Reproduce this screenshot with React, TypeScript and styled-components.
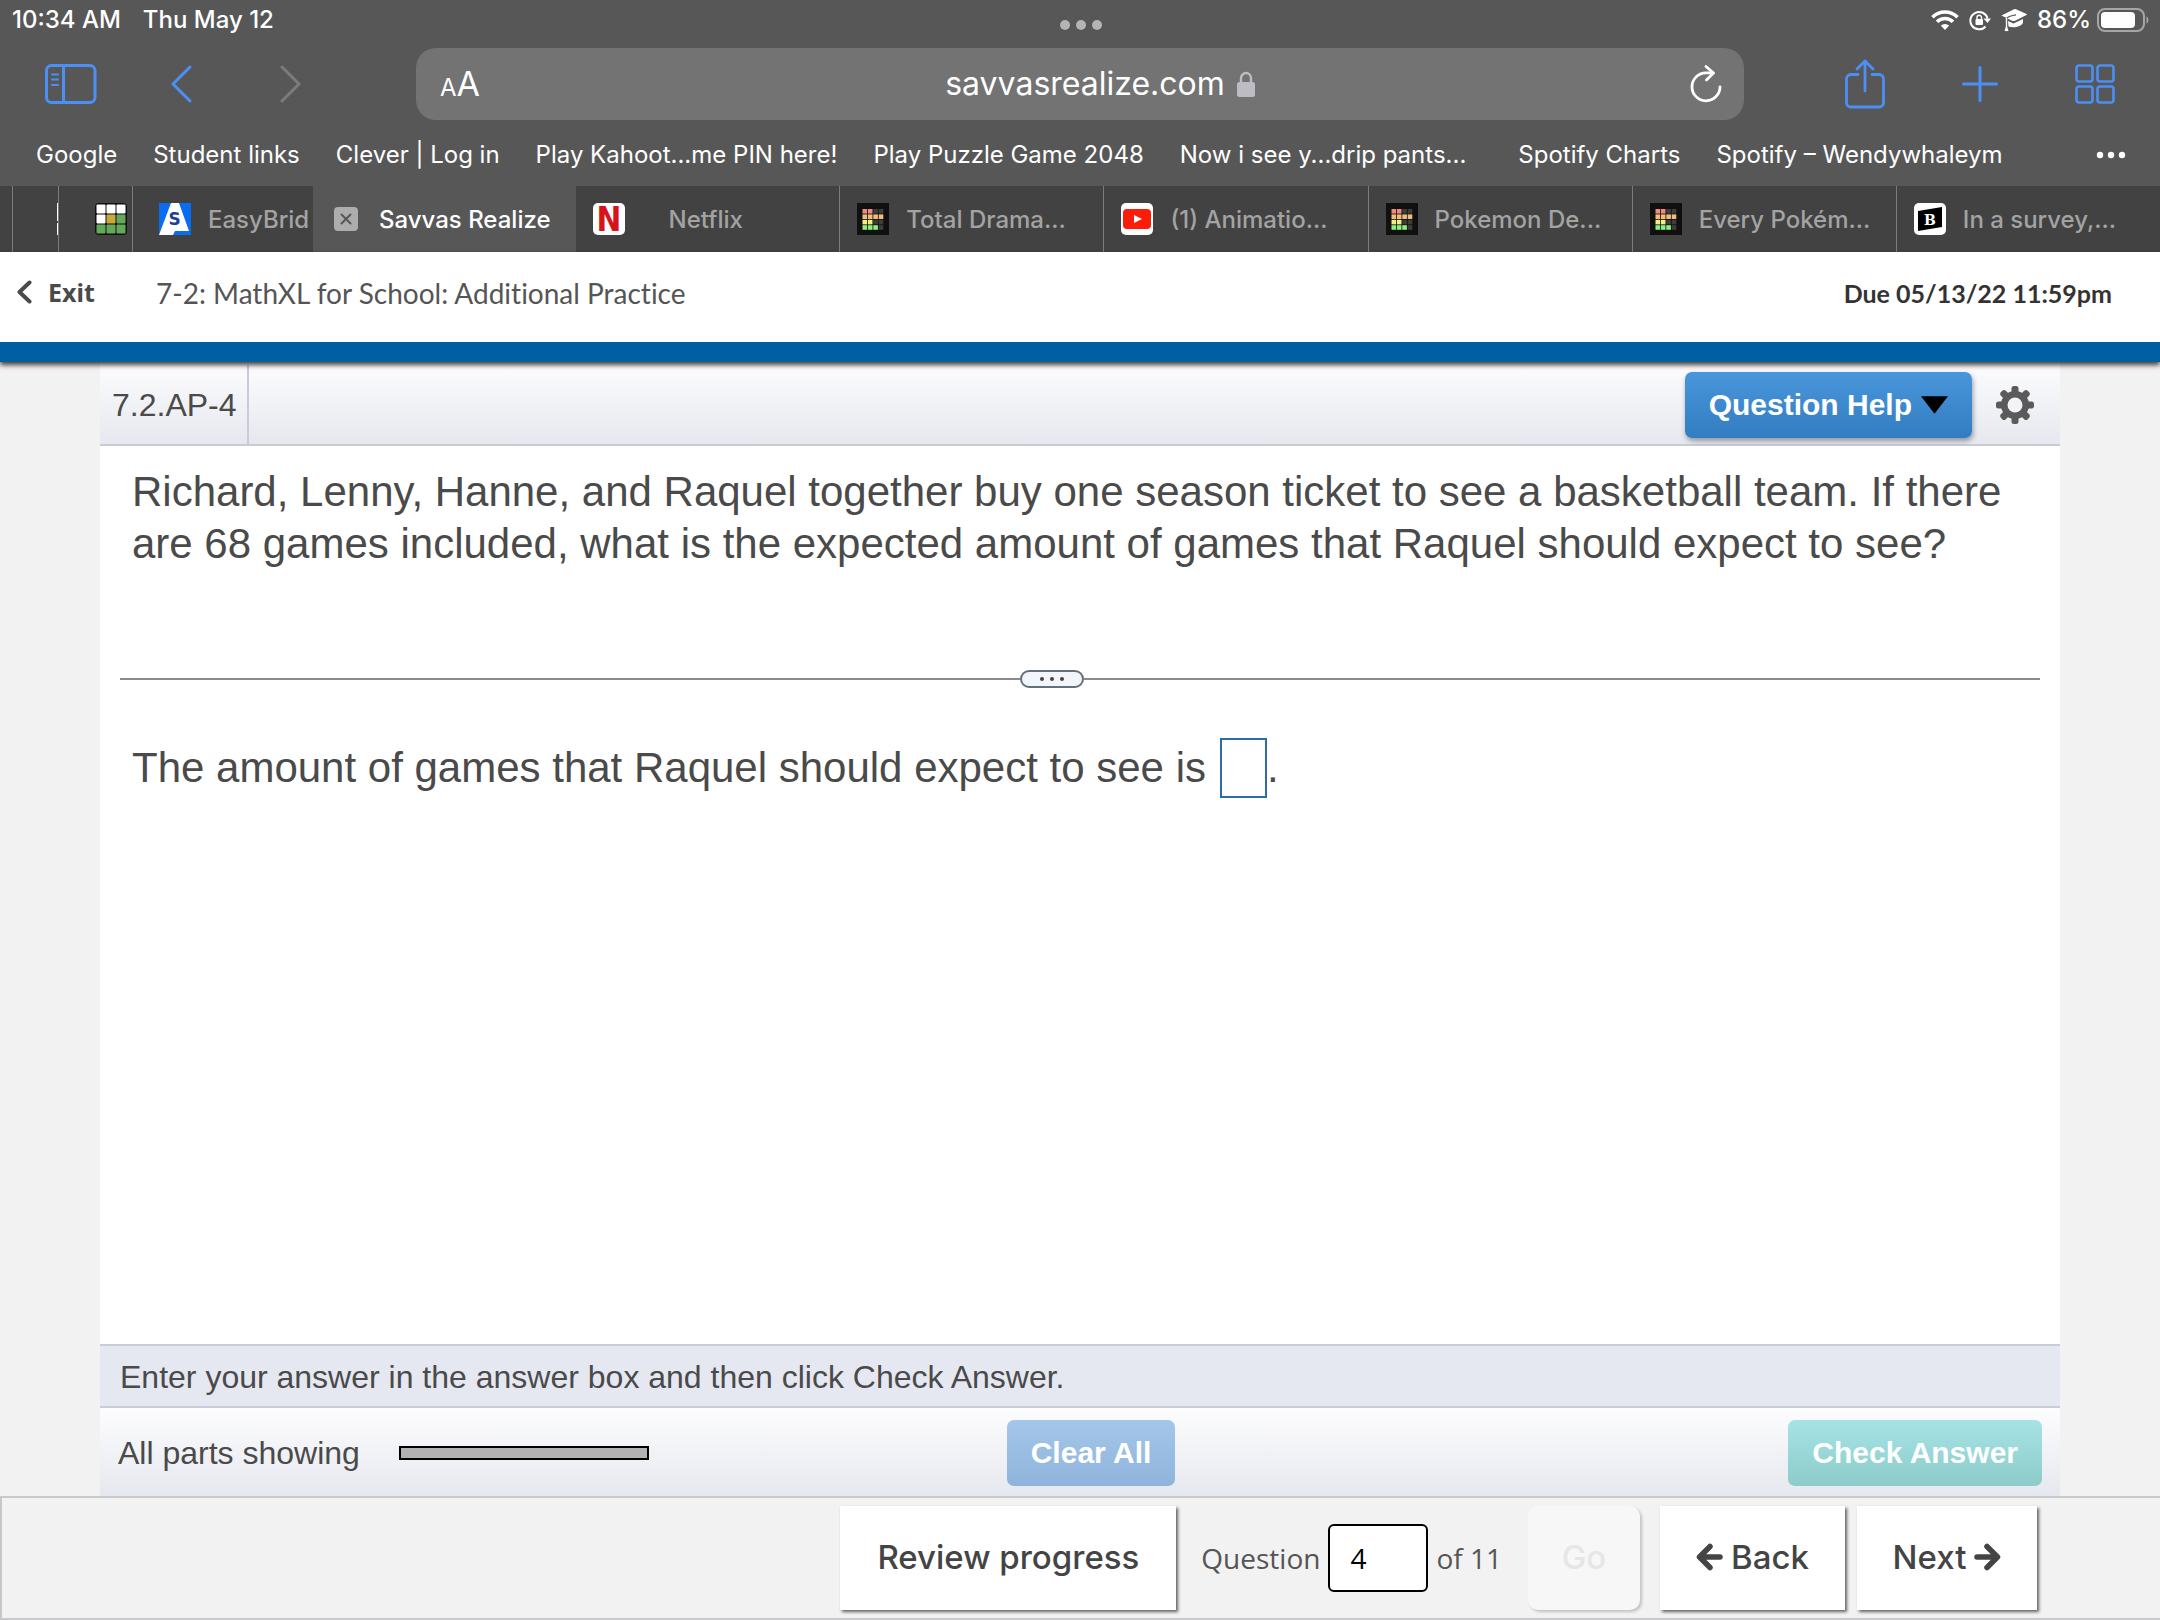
import React, { useState } from "react";
import styled, { createGlobalStyle, css } from "styled-components";

const ui = `Inter, "Noto Sans", sans-serif`;
const arial = `"Liberation Sans", Arial, sans-serif`;
const lato = `Lato, "Open Sans", sans-serif`;
const blue = "#4c8ff5";

const GlobalStyle = createGlobalStyle`
  *, *::before, *::after { box-sizing: border-box; }
  body { margin: 0; background: #f2f2f2; }
  button, input { font: inherit; margin: 0; padding: 0; border: 0; background: none; color: inherit; border-radius: 0; }
  button { cursor: pointer; }
  svg { display: block; flex: none; }
  p, h1, h2 { margin: 0; font-weight: 400; }
`;

const Page = styled.div`
  display: flex;
  flex-direction: column;
  min-height: 100vh;
  font-family: ${arial};
  color: #4a4a4a;
`;

/* Browser chrome */
const Chrome = styled.header`
  background: #575757;
  color: #fff;
  font-family: ${ui};
`;

const StatusBar = styled.div`
  display: grid;
  grid-template-columns: 1fr auto 1fr;
  align-items: center;
  height: 48px;
  padding: 0 10px 8px 12px;
  font-size: 24px;
  line-height: 40px;
  font-weight: 500;
`;

const StatusGroup = styled.div<{ $end?: boolean; $gap: number }>`
  display: flex;
  align-items: center;
  gap: ${(p) => p.$gap}px;
  justify-content: ${(p) => (p.$end ? "flex-end" : "flex-start")};
`;

const GrabDots = styled.button`
  display: flex;
  padding-top: 10px;
  gap: 6px;
  i { width: 10px; height: 10px; border-radius: 50%; background: #b4b4b4; }
`;

const BatteryGroup = styled.span`
  display: flex;
  align-items: center;
  gap: 6px;
`;

const Toolbar = styled.div`
  display: grid;
  grid-template-columns: 416px 1fr 416px;
  align-items: center;
`;

const ToolGroup = styled.div<{ $end?: boolean }>`
  display: flex;
  align-items: center;
  ${(p) =>
    p.$end
      ? css`justify-content: flex-end; gap: 63px; padding-right: 39px;`
      : css`gap: 58px; padding-left: 45px;`}
`;

const IconButton = styled.button<{ $color?: string }>`
  display: grid;
  place-items: center;
  width: 52px;
  height: 56px;
  color: ${(p) => p.$color || blue};
`;

const AddressBar = styled.div`
  display: grid;
  grid-template-columns: 76px 1fr 76px;
  align-items: center;
  height: 72px;
  border-radius: 20px;
  background: #737373;
  ${IconButton} { justify-self: center; }
`;

const ReaderButton = styled.button`
  padding: 4px 0 0 24px;
  text-align: left;
  font-size: 34px;
  line-height: 40px;
  small { font-size: 24px; }
`;

const Address = styled.div`
  display: flex;
  align-items: center;
  justify-content: center;
  gap: 12px;
  padding-left: 40px;
  font-size: 32px;
  line-height: 40px;
`;

const Bookmarks = styled.nav`
  display: flex;
  align-items: center;
  gap: 36px;
  height: 66px;
  padding: 4px 30px 0 36px;
  font-size: 24px;
  line-height: 32px;
  white-space: nowrap;
`;

const Bookmark = styled.a<{ $wide?: boolean }>`
  color: #fff;
  text-decoration: none;
  padding-right: ${(p) => (p.$wide ? 16 : 0)}px;
`;

const MoreButton = styled(IconButton)`
  margin-left: auto;
  width: 38px;
  height: 32px;
`;

const TabStrip = styled.div`
  display: flex;
  height: 66px;
  background: #424242;
`;

const TabSliver = styled.div<{ $width: number; $pad?: number }>`
  display: flex;
  align-items: center;
  justify-content: flex-end;
  width: ${(p) => p.$width}px;
  padding-right: ${(p) => p.$pad || 0}px;
  border-right: 1px solid #7c7c7c;
`;

const SliverEdge = styled.span`
  width: 1px;
  height: 32px;
  background: linear-gradient(#fff 0 18px, #424242 18px 20px, #fff 20px);
`;

const TabItem = styled.div<{ $active?: boolean; $clipped?: boolean; $divider?: boolean }>`
  display: flex;
  align-items: center;
  gap: 17px;
  white-space: nowrap;
  font-size: 24px;
  line-height: 32px;
  font-weight: 500;
  color: ${(p) => (p.$active ? "#fff" : "#a3a3a3")};
  background: ${(p) => (p.$active ? "#575757" : "transparent")};
  border-left: ${(p) => (p.$divider ? 1 : 0)}px solid #7c7c7c;
  ${(p) =>
    p.$clipped
      ? css`flex: 0 0 180px; padding-left: 26px;`
      : css`flex: 1 1 0; min-width: 0; padding: 0 20px 0 17px;`}
`;

const TabTitle = styled.button<{ $inset?: boolean }>`
  flex: 1;
  padding-top: 2px;
  text-align: ${(p) => (p.$inset ? "center" : "left")};
  padding-right: ${(p) => (p.$inset ? 50 : 0)}px;
`;

const CloseTab = styled.button`
  display: grid;
  place-items: center;
  width: 24px;
  height: 24px;
  margin: 0 4px;
  border-radius: 4px;
  background: #adadad;
  color: #575757;
`;

/* Assignment header */
const CourseHeader = styled.div`
  display: flex;
  align-items: center;
  height: 110px;
  padding: 0 48px 8px 16px;
  background: #fff;
  border-bottom: 20px solid #005fa3;
  box-shadow: 0 3px 5px rgba(0, 0, 0, 0.75);
  font-family: ${lato};
  font-variant-ligatures: none;
  position: relative;
`;

const ExitLink = styled.a`
  display: flex;
  align-items: center;
  gap: 16px;
  width: 140px;
  padding-bottom: 2px;
  color: #4a4a4a;
  text-decoration: none;
  font: 700 25px/32px "Noto Sans", sans-serif;
`;

const CourseTitle = styled.h1`
  flex: 1;
  font-size: 28px;
  line-height: 36px;
  color: #555;
`;

const DueDate = styled.div`
  font-size: 25px;
  line-height: 32px;
  font-weight: 700;
  color: #333;
`;

/* Exercise */
const Exercise = styled.main`
  flex: 1;
  display: flex;
  flex-direction: column;
  margin: 0 100px;
  background: #fff;
`;

const barFill = css`
  background: linear-gradient(#fdfdfe, #e6e8ef);
`;

const ExerciseBar = styled.div`
  display: flex;
  align-items: center;
  gap: 24px;
  height: 84px;
  padding: 3px 26px 0 0;
  border-bottom: 2px solid #c9ccd8;
  ${barFill}
`;

const ExerciseId = styled.h2`
  display: flex;
  align-items: center;
  height: 100%;
  padding: 0 10px 0 12px;
  margin-right: auto;
  border-right: 2px solid #c9ccd8;
  font-size: 32px;
  line-height: 40px;
`;

const ActionButton = styled.button<{ $tone: "primary" | "soft" | "teal" }>`
  display: flex;
  align-items: center;
  justify-content: center;
  gap: 9px;
  height: 66px;
  padding: 0 24px;
  border-radius: 7px;
  color: #fff;
  font-size: 30px;
  line-height: 40px;
  font-weight: 700;
  white-space: nowrap;
  background: ${(p) =>
    p.$tone === "primary"
      ? "linear-gradient(#4a96dc, #327dc0)"
      : p.$tone === "soft"
      ? "linear-gradient(#a4c6ea, #8fb4db)"
      : "linear-gradient(#a7e3e5, #8dcccb)"};
  box-shadow: ${(p) => (p.$tone === "primary" ? "1px 3px 5px rgba(60,70,90,.5)" : "none")};
`;

const GearButton = styled.button`
  color: #5a5a5a;
`;

const Problem = styled.section`
  flex: 1;
  padding: 20px 20px 40px;
  font-size: 42px;
  line-height: 52px;
`;

const Prompt = styled.p`
  min-height: 203px;
  padding: 0 12px;
`;

const Divider = styled.div`
  display: flex;
  align-items: center;
  height: 20px;
  &::before, &::after { content: ""; height: 2px; background: #868c92; }
  &::before { flex: 900; }
  &::after { flex: 956; }
`;

const DividerHandle = styled.button`
  display: flex;
  align-items: center;
  justify-content: center;
  gap: 6px;
  width: 64px;
  height: 18px;
  border: 2px solid #66707a;
  border-radius: 9px;
  background: #f2f5f9;
  i { width: 4px; height: 4px; border-radius: 50%; background: #444; }
`;

const AnswerLine = styled.label`
  display: flex;
  align-items: center;
  padding: 49px 12px 0;
`;

const AnswerInput = styled.input`
  width: 47px;
  height: 60px;
  margin-left: 14px;
  border: 2px solid #2f69b0;
  text-align: center;
`;

const Instruction = styled.p`
  padding: 11px 20px 9px;
  background: #e5e8f1;
  border: solid #c9ccd8;
  border-width: 2px 0;
  font-size: 32px;
  line-height: 40px;
`;

const Controls = styled.div`
  display: grid;
  grid-template-columns: 888fr auto 866fr;
  align-items: center;
  height: 88px;
  padding: 2px 18px 0;
  font-size: 32px;
  line-height: 40px;
  ${barFill}
`;

const PartsStatus = styled.div`
  display: flex;
  align-items: center;
  gap: 39px;
`;

const PartsBar = styled.span`
  width: 250px;
  height: 14px;
  border: 2px solid #000;
  background: #b2b2b2;
`;

const ControlEnd = styled.div`
  display: flex;
  justify-content: flex-end;
`;

/* Footer navigation */
const Footer = styled.footer`
  display: flex;
  align-items: flex-start;
  justify-content: flex-end;
  height: 124px;
  padding: 8px 123px 0 0;
  border: solid #c8c8cb;
  border-width: 2px 0 2px 2px;
  background: #f2f2f2;
`;

const NavButton = styled.button<{ $width: number }>`
  display: flex;
  align-items: center;
  justify-content: center;
  gap: 8px;
  width: ${(p) => p.$width}px;
  height: 104px;
  padding-bottom: 2px;
  margin-left: 12px;
  background: #fff;
  box-shadow: 2px 2px 3px rgba(0, 0, 0, 0.6);
  font: 500 33px/40px ${ui};
  color: #444;
  &:disabled {
    margin: 0 8px 0 26px;
    background: #f7f7f7;
    color: #e6e6e6;
    border-radius: 10px;
    box-shadow: 2px 2px 3px rgba(0, 0, 0, 0.2);
  }
`;

const QuestionJump = styled.label`
  display: flex;
  align-items: center;
  gap: 8px;
  height: 104px;
  margin-left: 25px;
  font: 400 28px/40px "Open Sans", "Noto Sans", sans-serif;
  color: #555;
`;

const QuestionInput = styled.input`
  width: 100px;
  height: 68px;
  padding-left: 20px;
  border: 2px solid #000;
  border-radius: 6px;
  background: #fff;
  color: #000;
`;

/* Favicons */
const TierIcon = () => {
  const rows = [
    ["#f08a80", 2],
    ["#f2bd7c", 4],
    ["#f0f080", 2],
    ["#8cf07c", 3],
  ] as const;
  return (
    <svg width="32" height="32" viewBox="0 0 32 32">
      <rect width="32" height="32" fill="#101010" />
      {rows.map(([color, count], r) =>
        [0, 1, 2, 3].map((c) => (
          <rect key={`${r}${c}`} x={5.5 + c * 5.4} y={6 + r * 5.4} width="4.6" height="4.6" fill={c < count ? color : "#3d3d3d"} />
        ))
      )}
    </svg>
  );
};

const WordGridIcon = () => {
  const cells = ["#fff", "#fff", "#fff", "#fff", "#c9a93c", "#64a85c", "#64a85c", "#64a85c", "#64a85c"];
  return (
    <svg width="32" height="32" viewBox="0 0 32 32">
      <rect width="32" height="32" rx="4" fill="#111" />
      {cells.map((c, i) => (
        <rect key={i} x={1.5 + (i % 3) * 10} y={1.5 + Math.floor(i / 3) * 10} width="9" height="9" rx="1" fill={c} />
      ))}
    </svg>
  );
};

const BridgeIcon = () => (
  <svg width="32" height="32" viewBox="0 0 32 32">
    <rect width="32" height="32" fill="#0a6cf0" />
    <path d="M12 0h8l10 28H16l-2 4H0z" fill="#fff" />
    <text x="15.5" y="22" textAnchor="middle" fontFamily="DejaVu Sans" fontWeight="700" fontSize="17" fill="#1d3f97">S</text>
  </svg>
);

const NetflixIcon = () => (
  <svg width="32" height="32" viewBox="0 0 32 32" overflow="visible">
    <rect width="32" height="32" rx="5" fill="#fff" />
    <text x="16" y="28" textAnchor="middle" fontFamily="Liberation Sans Narrow, DejaVu Sans Condensed, Liberation Sans" fontWeight="700" fontSize="33" fill="#d8121b">N</text>
  </svg>
);

const VideoIcon = () => (
  <svg width="32" height="32" viewBox="0 0 32 32">
    <rect width="32" height="32" rx="5" fill="#fff" />
    <rect x="2" y="6" width="28" height="20" rx="4" fill="#fb1d07" />
    <path d="M13 12l8 4-8 4z" fill="#fff" />
  </svg>
);

const BrainIcon = () => (
  <svg width="32" height="32" viewBox="0 0 32 32">
    <rect width="32" height="32" rx="5" fill="#fff" />
    <path d="M4 8l24-4v20L4 28z" fill="#000" />
    <text x="16" y="21.5" textAnchor="middle" fontFamily="DejaVu Serif" fontWeight="700" fontSize="14" fill="#fff">B</text>
  </svg>
);

/* Glyphs */
const stroke = { fill: "none", stroke: "currentColor", strokeLinecap: "round", strokeLinejoin: "round" } as const;

const SidebarGlyph = () => (
  <svg width="52" height="40" viewBox="0 0 52 40" {...stroke} strokeWidth="3">
    <rect x="1.5" y="1.5" width="48.5" height="37" rx="5" />
    <path d="M18.5 2v36" />
    <path d="M7 10.5h6M7 15.5h6M7 21h6" strokeWidth="2" />
  </svg>
);
const ChevronGlyph = ({ flip }: { flip?: boolean }) => (
  <svg width="22" height="38" viewBox="0 0 22 38" {...stroke} strokeWidth="3">
    <path d={flip ? "M2 2l17 17L2 36" : "M20 2L3 19l17 17"} />
  </svg>
);
const ReloadGlyph = () => (
  <svg width="32" height="38" viewBox="0 0 32 38" {...stroke} strokeWidth="2.8">
    <path d="M30 22a14 14 0 1 1-14-14.2h7" />
    <path d="M16 1.5l7.5 6.5-7 7" />
  </svg>
);
const LockGlyph = () => (
  <svg width="18" height="26" viewBox="0 0 18 26">
    <path d="M4 12V7.500a5 5.500 0 0 1 10 0V12" fill="none" stroke="#bdbcc4" strokeWidth="2.4" />
    <rect y="11" width="18" height="15" rx="2.5" fill="#bdbcc4" />
  </svg>
);
const ShareGlyph = () => (
  <svg width="40" height="50" viewBox="0 0 40 50" {...stroke} strokeWidth="2.8">
    <path d="M13 15.5H6a4.5 4.5 0 0 0-4.5 4.5v23.5A4.5 4.5 0 0 0 6 48h28a4.5 4.5 0 0 0 4.5-4.5V20a4.5 4.5 0 0 0-4.5-4.5h-7" />
    <path d="M20 32V2M12 10l8-8 8 8" />
  </svg>
);
const PlusGlyph = () => (
  <svg width="36" height="36" viewBox="0 0 36 36" {...stroke} strokeWidth="3">
    <path d="M18 1.5v33M1.5 18h33" />
  </svg>
);
const OverviewGlyph = () => (
  <svg width="40" height="40" viewBox="0 0 40 40" {...stroke} strokeWidth="2.6">
    {[[1.5, 1.5], [22.5, 1.5], [1.5, 22.5], [22.5, 22.5]].map(([x, y]) => (
      <rect key={`${x}-${y}`} x={x} y={y} width="16" height="16" rx="2.5" />
    ))}
  </svg>
);
const WifiGlyph = () => (
  <svg width="28" height="20" viewBox="0 0 28 20" fill="none" stroke="#fff" strokeWidth="3.6">
    <path d="M1.5 7.200a17.700 17.700 0 0 1 25 0" />
    <path d="M6 11.800a11.300 11.300 0 0 1 16 0" />
    <path d="M14 20l-4.200-4.400a6 6 0 0 1 8.400 0z" fill="#fff" stroke="none" />
  </svg>
);
const RotationLockGlyph = () => (
  <svg width="22" height="22" viewBox="0 0 22 22">
    <path d="M16.500 17.500a8.700 8.700 0 1 1 2-8" fill="none" stroke="#fff" strokeWidth="2" />
    <path d="M14.500 9.500H22L18.500 14z" fill="#fff" />
    <rect x="6.5" y="10" width="7.5" height="6" rx="1" fill="#fff" />
    <path d="M8 10.500V8.500a2.250 2.250 0 0 1 4.500 0v2" fill="none" stroke="#fff" strokeWidth="1.4" />
  </svg>
);
const CapGlyph = () => (
  <svg width="26" height="24" viewBox="0 0 26 24" fill="#fff">
    <path d="M7 13l5.500 2.500L22 11v3.500c-1 4-9.500 6-14.500 4z" />
    <path d="M0.500 7.500L13 1.200q1-.4 2 0L25.500 6q.8.500 0 1L14 12.700q-1.500.6-3 0z" />
    <path d="M15 6.800Q8 7.800 5.500 10.500V19" fill="none" stroke="#575757" strokeWidth="1.200" />
    <path d="M5.500 10v9" stroke="#fff" strokeWidth="1.400" />
    <path d="M5.500 17l2 5.500q-2 1.500-4 0z" />
  </svg>
);
const BatteryGlyph = () => (
  <svg width="53" height="24" viewBox="0 0 53 24">
    <rect x="1" y="1" width="46" height="22" rx="7" fill="none" stroke="#a5a5a5" strokeWidth="2" />
    <rect x="4" y="4" width="34" height="16" rx="4" fill="#fff" />
    <path d="M49.500 8a5 5 0 0 1 0 8z" fill="#a5a5a5" />
  </svg>
);
const DotsGlyph = () => (
  <svg width="30" height="8" viewBox="0 0 30 8" fill="#fff">
    <circle cx="4" cy="4" r="3.2" /><circle cx="15" cy="4" r="3.2" /><circle cx="26" cy="4" r="3.2" />
  </svg>
);
const GearGlyph = () => (
  <svg width="38" height="38" viewBox="-19 -19 38 38">
    {[0, 45, 90, 135].map((a) => (
      <rect key={a} x="-3.5" y="-19" width="7" height="38" rx="2.5" transform={`rotate(${a})`} fill="currentColor" />
    ))}
    <circle r="14" fill="currentColor" />
    <circle r="7.5" fill="#f2f3f6" />
  </svg>
);
const ArrowGlyph = ({ flip }: { flip?: boolean }) => (
  <svg width="27" height="28" viewBox="0 0 27 28" {...stroke} strokeWidth="5.5">
    {flip ? <path d="M3 14h19M13 3.500L23.500 14 13 24.500" /> : <path d="M24 14H5M14 3.500L3.500 14 14 24.500" />}
  </svg>
);

const bookmarks = [
  "Google",
  "Student links",
  "Clever | Log in",
  "Play Kahoot...me PIN here!",
  "Play Puzzle Game 2048",
  "Now i see y...drip pants...",
  "Spotify Charts",
  "Spotify – Wendywhaleym",
];

const tabs = [
  { title: "Total Drama...", icon: <TierIcon /> },
  { title: "(1) Animatio...", icon: <VideoIcon /> },
  { title: "Pokemon De...", icon: <TierIcon /> },
  { title: "Every Pokém...", icon: <TierIcon /> },
  { title: "In a survey,...", icon: <BrainIcon /> },
];

export default function App() {
  const [answer, setAnswer] = useState("");
  const [question, setQuestion] = useState("4");

  return (
    <Page>
      <GlobalStyle />
      <Chrome>
        <StatusBar>
          <StatusGroup $gap={22}>
            <span>10:34 AM</span>
            <span>Thu May 12</span>
          </StatusGroup>
          <GrabDots aria-label="Multitasking"><i /><i /><i /></GrabDots>
          <StatusGroup $end $gap={10}>
            <WifiGlyph />
            <RotationLockGlyph />
            <CapGlyph />
            <BatteryGroup>86% <BatteryGlyph /></BatteryGroup>
          </StatusGroup>
        </StatusBar>

        <Toolbar>
          <ToolGroup>
            <IconButton aria-label="Sidebar"><SidebarGlyph /></IconButton>
            <IconButton aria-label="Back"><ChevronGlyph /></IconButton>
            <IconButton aria-label="Forward" $color="#7b7b7b"><ChevronGlyph flip /></IconButton>
          </ToolGroup>
          <AddressBar>
            <ReaderButton><small>A</small>A</ReaderButton>
            <Address>savvasrealize.com <LockGlyph /></Address>
            <IconButton aria-label="Reload" $color="#fff"><ReloadGlyph /></IconButton>
          </AddressBar>
          <ToolGroup $end>
            <IconButton aria-label="Share"><ShareGlyph /></IconButton>
            <IconButton aria-label="New tab"><PlusGlyph /></IconButton>
            <IconButton aria-label="Tab overview"><OverviewGlyph /></IconButton>
          </ToolGroup>
        </Toolbar>

        <Bookmarks>
          {bookmarks.map((b, i) => (
            <Bookmark key={b} href="#" $wide={i === 5}>{b}</Bookmark>
          ))}
          <MoreButton aria-label="More bookmarks"><DotsGlyph /></MoreButton>
        </Bookmarks>

        <TabStrip>
          <TabSliver $width={13} />
          <TabSliver $width={46}><SliverEdge /></TabSliver>
          <TabSliver $width={74} $pad={5}><WordGridIcon /></TabSliver>
          <TabItem $clipped><BridgeIcon /><TabTitle>EasyBrid</TabTitle></TabItem>
          <TabItem $active>
            <CloseTab aria-label="Close tab">
              <svg width="12" height="12" viewBox="0 0 12 12" {...stroke} strokeWidth="2"><path d="M1.500 1.500l9 9M10.500 1.500l-9 9" /></svg>
            </CloseTab>
            <TabTitle>Savvas Realize</TabTitle>
          </TabItem>
          <TabItem><NetflixIcon /><TabTitle $inset>Netflix</TabTitle></TabItem>
          {tabs.map((t) => (
            <TabItem key={t.title} $divider>{t.icon}<TabTitle>{t.title}</TabTitle></TabItem>
          ))}
        </TabStrip>
      </Chrome>

      <CourseHeader>
        <ExitLink href="#">
          <svg width="16" height="24" viewBox="0 0 16 24" {...stroke} strokeWidth="4"><path d="M13.500 2.500L3.500 12l10 9.500" /></svg>
          Exit
        </ExitLink>
        <CourseTitle>7-2: MathXL for School: Additional Practice</CourseTitle>
        <DueDate>Due 05/13/22 11:59pm</DueDate>
      </CourseHeader>

      <Exercise>
        <ExerciseBar>
          <ExerciseId>7.2.AP-4</ExerciseId>
          <ActionButton $tone="primary">
            Question Help
            <svg width="27" height="18" viewBox="0 0 28 18"><path d="M0 0h28L14 18z" fill="#000" /></svg>
          </ActionButton>
          <GearButton aria-label="Settings"><GearGlyph /></GearButton>
        </ExerciseBar>

        <Problem>
          <Prompt>
            Richard, Lenny, Hanne, and Raquel together buy one season ticket to see a basketball team. If there are 68
            games included, what is the expected amount of games that Raquel should expect to see?
          </Prompt>
          <Divider>
            <DividerHandle aria-label="Resize"><i /><i /><i /></DividerHandle>
          </Divider>
          <AnswerLine>
            The amount of games that Raquel should expect to see is
            <AnswerInput value={answer} onChange={(e) => setAnswer(e.target.value)} />.
          </AnswerLine>
        </Problem>

        <Instruction>Enter your answer in the answer box and then click Check Answer.</Instruction>
        <Controls>
          <PartsStatus>All parts showing <PartsBar /></PartsStatus>
          <ActionButton $tone="soft">Clear All</ActionButton>
          <ControlEnd><ActionButton $tone="teal">Check Answer</ActionButton></ControlEnd>
        </Controls>
      </Exercise>

      <Footer>
        <NavButton $width={336}>Review progress</NavButton>
        <QuestionJump>
          Question
          <QuestionInput value={question} onChange={(e) => setQuestion(e.target.value)} />
          of 11
        </QuestionJump>
        <NavButton $width={112} disabled>Go</NavButton>
        <NavButton $width={185}><ArrowGlyph />Back</NavButton>
        <NavButton $width={180}>Next<ArrowGlyph flip /></NavButton>
      </Footer>
    </Page>
  );
}
